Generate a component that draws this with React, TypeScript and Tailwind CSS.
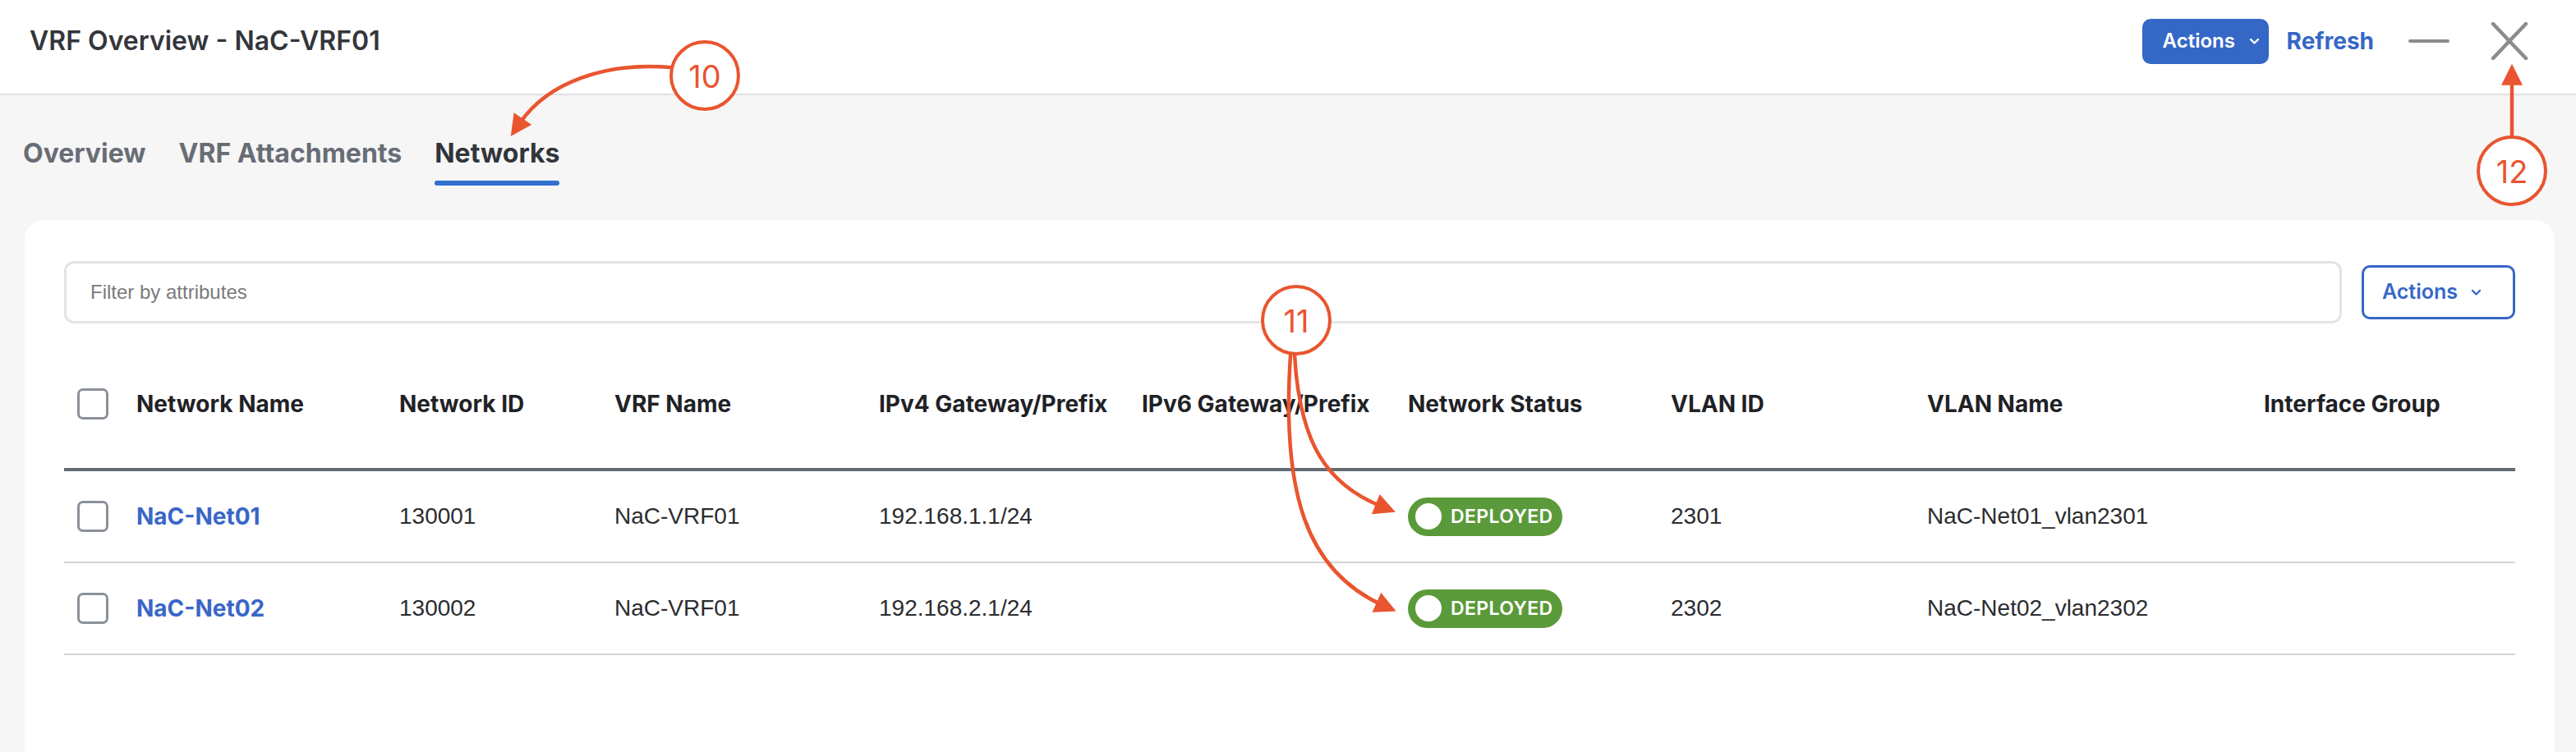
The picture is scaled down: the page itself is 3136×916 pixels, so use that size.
import React from 'react';

const columns = [
  'Network Name',
  'Network ID',
  'VRF Name',
  'IPv4 Gateway/Prefix',
  'IPv6 Gateway/Prefix',
  'Network Status',
  'VLAN ID',
  'VLAN Name',
  'Interface Group',
];

const networks = [
  { name: 'NaC-Net01', id: '130001', vrf: 'NaC-VRF01', ipv4: '192.168.1.1/24', ipv6: '', vlan: '2301', vlanName: 'NaC-Net01_vlan2301', group: '' },
  { name: 'NaC-Net02', id: '130002', vrf: 'NaC-VRF01', ipv4: '192.168.2.1/24', ipv6: '', vlan: '2302', vlanName: 'NaC-Net02_vlan2302', group: '' },
];

const gridCols = 'grid grid-cols-[88px_320px_262px_322px_320px_324px_320px_312px_410px_1fr]';

function Chevron({ className }: { className?: string }) {
  return (
    <svg className={className} width="13" height="9" viewBox="0 0 13 9" fill="none">
      <path d="M2 2l4.5 4.5L11 2" stroke="currentColor" strokeWidth="2.4" strokeLinecap="round" strokeLinejoin="round" />
    </svg>
  );
}

function Checkbox() {
  return <div className="ml-[16px] w-[38px] h-[38px] rounded-[7px] border-[3px] border-[#8b9199] bg-white" />;
}

function StatusBadge() {
  return (
    <div className="flex items-center w-[188px] h-[47px] rounded-full bg-[#5b9a3a] pl-[9px]">
      <div className="w-[32px] h-[32px] rounded-full bg-white" />
      <span className="ml-[11px] text-[23px] font-semibold text-white tracking-[0.4px]">DEPLOYED</span>
    </div>
  );
}

// callout overlay (numbered circles + arrows)
function Callouts() {
  const c = '#e9552f';
  return (
    <svg className="absolute inset-0 pointer-events-none" width="3136" height="916" viewBox="0 0 3136 916">
      <defs>
        <marker id="ah" viewBox="0 0 10 10" refX="3" refY="5" markerWidth="28" markerHeight="26" markerUnits="userSpaceOnUse" orient="auto">
          <path d="M0,0 L10,5 L0,10 z" fill={c} />
        </marker>
      </defs>
      <g stroke={c} strokeWidth="4.5" fill="none" strokeLinecap="round">
        <path d="M816,82 C740,76 668,98 632,151" markerEnd="url(#ah)" />
        <path d="M3058,166 L3058,96" markerEnd="url(#ah)" />
        <path d="M1576,432 C1582,540 1615,590 1682,617" markerEnd="url(#ah)" />
        <path d="M1571,433 C1560,600 1590,695 1683,737" markerEnd="url(#ah)" />
      </g>
      {[
        { x: 858, y: 92, t: '10' },
        { x: 3058, y: 208, t: '12' },
        { x: 1578, y: 390, t: '11' },
      ].map((n) => (
        <g key={n.t}>
          <circle cx={n.x} cy={n.y} r="41" fill="white" stroke={c} strokeWidth="4" />
          <text
            x={n.x}
            y={n.y + 1}
            textAnchor="middle"
            dominantBaseline="central"
            fill={c}
            fontSize="38"
            fontFamily="Inter, sans-serif"
          >
            {n.t}
          </text>
        </g>
      ))}
    </svg>
  );
}

export default function App() {
  return (
    <div className="relative w-[3136px] h-[916px] overflow-hidden bg-[#f6f6f6] font-['Inter',sans-serif] flex flex-col">
      {/* Header */}
      <header className="h-[116px] shrink-0 bg-white border-b-2 border-[#e0e0e0] flex items-center justify-between pl-[36px] pr-[58px] pb-[14px]">
        <h1 className="text-[32px] font-semibold text-[#33363b]">VRF Overview - NaC-VRF01</h1>
        <div className="flex items-center">
          <button className="flex items-center h-[55px] w-[154px] rounded-[10px] bg-[#3567c6] text-white pl-[25px]">
            <span className="text-[24px] font-semibold">Actions</span>
            <Chevron className="ml-[17px]" />
          </button>
          <button className="ml-[22px] text-[28px] font-bold text-[#3567c6]">Refresh</button>
          <div className="ml-[42px] w-[50px] h-[4px] rounded-full bg-[#8c8c8c]" />
          <svg className="ml-[50px]" width="46" height="46" viewBox="0 0 46 46">
            <path d="M3 2l40 42M43 2L3 44" stroke="#8c8c8c" strokeWidth="4.5" strokeLinecap="round" />
          </svg>
        </div>
      </header>

      {/* Tabs */}
      <nav className="flex items-start pl-[28px] pt-[52px] gap-[40px] shrink-0">
        {['Overview', 'VRF Attachments', 'Networks'].map((tab) => {
          const active = tab === 'Networks';
          return (
            <div key={tab} className="flex flex-col">
              <span className={`text-[32px] leading-[38px] font-bold ${active ? 'text-[#31353a]' : 'text-[#686d75]'}`}>{tab}</span>
              <div className={`mt-[14px] h-[6px] rounded-full ${active ? 'bg-[#3170cf]' : 'bg-transparent'}`} />
            </div>
          );
        })}
      </nav>

      {/* Card */}
      <main className="mt-[42px] ml-[30px] mr-[26px] flex-1 bg-white rounded-t-[24px] px-[48px] pt-[50px]">
        <div className="flex items-center gap-[24px]">
          <div className="flex-1 h-[76px] rounded-[12px] border-[3px] border-[#e3e4e7] flex items-center pl-[29px]">
            <span className="text-[24px] text-[#7a7a7a] font-['Liberation_Sans',sans-serif]">Filter by attributes</span>
          </div>
          <button className="flex items-center h-[66px] w-[187px] rounded-[10px] border-[3px] border-[#3567c6] text-[#3567c6] pl-[22px]">
            <span className="text-[25px] font-semibold">Actions</span>
            <Chevron className="ml-[16px]" />
          </button>
        </div>

        <div className="mt-[20px]">
          <div className={`${gridCols} items-center h-[160px] border-b-4 border-[#646b73]`}>
            <Checkbox />
            {columns.map((col) => (
              <div key={col} className="text-[28px] font-bold text-[#1f2226] whitespace-nowrap">
                {col}
              </div>
            ))}
          </div>
          {networks.map((n) => (
            <div key={n.name} className={`${gridCols} items-center h-[112px] border-b-2 border-[#d4d4d4] text-[28px] text-[#2b2d30]`}>
              <Checkbox />
              <div className="font-bold text-[#3a66c8]">{n.name}</div>
              <div className="font-['Liberation_Sans',sans-serif]">{n.id}</div>
              <div className="font-['Liberation_Sans',sans-serif]">{n.vrf}</div>
              <div className="font-['Liberation_Sans',sans-serif]">{n.ipv4}</div>
              <div>{n.ipv6}</div>
              <div>
                <StatusBadge />
              </div>
              <div className="font-['Liberation_Sans',sans-serif]">{n.vlan}</div>
              <div className="font-['Liberation_Sans',sans-serif]">{n.vlanName}</div>
              <div>{n.group}</div>
            </div>
          ))}
        </div>
      </main>

      <Callouts />
    </div>
  );
}
